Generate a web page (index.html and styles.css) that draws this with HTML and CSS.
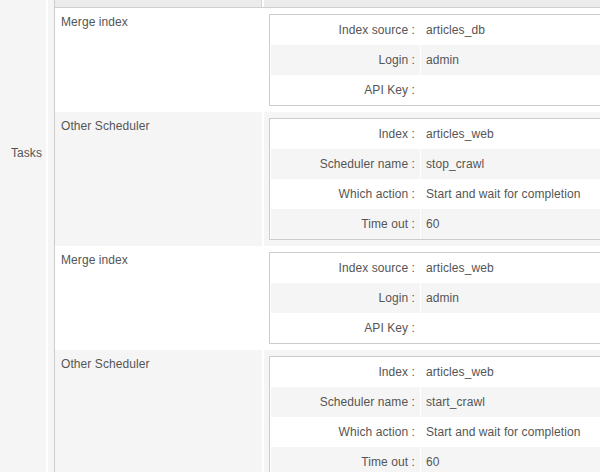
FILE: index.html
```html
<!DOCTYPE html>
<html>
<head>
<meta charset="utf-8">
<link rel="stylesheet" href="styles.css">
</head>
<body>
<div class="page">
  <div class="side"><span class="side-label">Tasks</span></div>
  <div class="main">
    <div class="tasks">
      <div class="head"><div class="head-cell head-left"></div><div class="head-cell head-right"></div></div>

      <div class="row">
        <div class="cell name">Merge index</div>
        <div class="cell params">
          <div class="box">
            <div class="kv"><div class="k">Index source :</div><div class="v">articles_db</div></div>
            <div class="kv alt"><div class="k">Login :</div><div class="v">admin</div></div>
            <div class="kv"><div class="k">API Key :</div><div class="v"></div></div>
          </div>
        </div>
      </div>

      <div class="row alt">
        <div class="cell name">Other Scheduler</div>
        <div class="cell params">
          <div class="box">
            <div class="kv"><div class="k">Index :</div><div class="v">articles_web</div></div>
            <div class="kv alt"><div class="k">Scheduler name :</div><div class="v">stop_crawl</div></div>
            <div class="kv"><div class="k">Which action :</div><div class="v">Start and wait for completion</div></div>
            <div class="kv alt"><div class="k">Time out :</div><div class="v">60</div></div>
          </div>
        </div>
      </div>

      <div class="row">
        <div class="cell name">Merge index</div>
        <div class="cell params">
          <div class="box">
            <div class="kv"><div class="k">Index source :</div><div class="v">articles_web</div></div>
            <div class="kv alt"><div class="k">Login :</div><div class="v">admin</div></div>
            <div class="kv"><div class="k">API Key :</div><div class="v"></div></div>
          </div>
        </div>
      </div>

      <div class="row alt">
        <div class="cell name">Other Scheduler</div>
        <div class="cell params">
          <div class="box">
            <div class="kv"><div class="k">Index :</div><div class="v">articles_web</div></div>
            <div class="kv alt"><div class="k">Scheduler name :</div><div class="v">start_crawl</div></div>
            <div class="kv"><div class="k">Which action :</div><div class="v">Start and wait for completion</div></div>
            <div class="kv alt"><div class="k">Time out :</div><div class="v">60</div></div>
          </div>
        </div>
      </div>
    </div>
  </div>
</div>
</body>
</html>
```

FILE: styles.css
```css
html, body {
  margin: 0;
  padding: 0;
  background: #fff;
  overflow: hidden;
}

body {
  font-family: "Liberation Sans", Arial, sans-serif;
  font-size: 12px;
  line-height: 15px;
  letter-spacing: 0.08px;
  color: #555;
}

.page {
  display: flex;
  gap: 2px;
  width: 600px;
  height: 472px;
  overflow: hidden;
}

.side {
  width: 46px;
  flex: none;
  background: #f5f5f5;
  display: flex;
  justify-content: flex-end;
  align-items: flex-start;
  padding-top: 146px;
  padding-right: 4px;
  box-sizing: border-box;
}

.main {
  flex: 1;
  min-width: 0;
  background: #f5f5f5;
  padding-left: 6px;
}

.tasks {
  border-left: 1px solid #ccc;
  background: #fff;
  display: flex;
  flex-direction: column;
}

.head {
  display: flex;
  gap: 2px;
  height: 7px;
  border-bottom: 1px solid #cfcfcf;
  background: #fff;
}

.head-cell {
  background: #ececec;
}

.head-left {
  width: 207px;
  border-right: 1px solid #d6d6d6;
  box-sizing: border-box;
}

.head-right {
  flex: 1;
}

.row {
  display: flex;
  gap: 2px;
}

.cell {
  background: #fff;
}

.row.alt .cell {
  background: #f5f5f5;
}

.name {
  width: 207px;
  flex: none;
  box-sizing: border-box;
  padding: 7px 6px 0 6px;
}

.params {
  flex: 1;
  min-width: 0;
  padding: 6px 0 6px 5px;
}

.box {
  border: 1px solid #ccc;
  border-right: 0;
  background: #fff;
  padding: 0 0 0 1px;
}

.kv {
  display: flex;
  gap: 1px;
  height: 30px;
  line-height: 30px;
  background: #fff;
}

.kv .k, .kv .v {
  background: #fff;
}

.kv.alt .k, .kv.alt .v {
  background: #f5f5f5;
}

.k {
  width: 149px;
  flex: none;
  text-align: right;
  padding-right: 5px;
  box-sizing: border-box;
  white-space: nowrap;
}

.v {
  flex: 1;
  min-width: 0;
  padding-left: 5px;
  white-space: nowrap;
}
```
